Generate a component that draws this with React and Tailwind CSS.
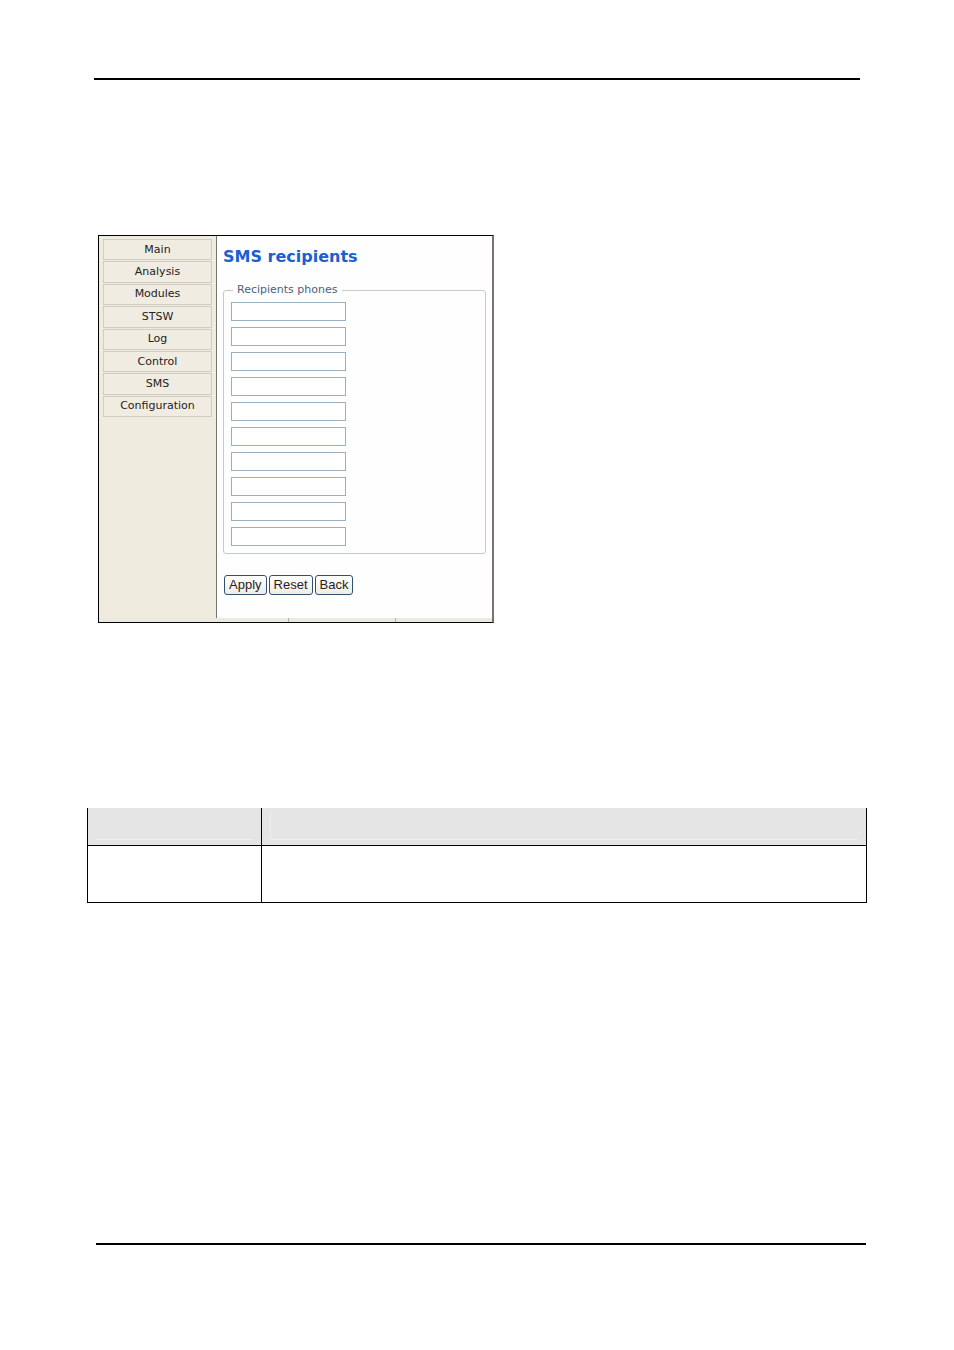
import { useState } from "react";

const menuItems = [
  "Main",
  "Analysis",
  "Modules",
  "STSW",
  "Log",
  "Control",
  "SMS",
  "Configuration",
];

const emptyPhones = Array(10).fill("");

function Sidebar() {
  return (
    <nav className="w-[118px] shrink-0 border-r border-[#77756f] bg-[#f0ebdf] px-1 pt-[3px]">
      <ul className="grid h-[179px] grid-rows-8">
        {menuItems.map((item) => (
          <li key={item} className="flex pb-px">
            <button
              type="button"
              className="w-full border border-[#d0cec4] bg-[#f1ece1] text-center text-[11px] leading-4 text-[#222]"
            >
              {item}
            </button>
          </li>
        ))}
      </ul>
    </nav>
  );
}

function RecipientsForm() {
  const [phones, setPhones] = useState(emptyPhones);

  const updatePhone = (index, value) => {
    setPhones(phones.map((phone, i) => (i === index ? value : phone)));
  };

  const buttonStyle =
    "h-5 rounded-[3px] border border-[#34506f] bg-gradient-to-b from-white to-[#efece6] px-1 text-[13px] leading-4 text-[#2a1c20] font-['Liberation_Sans',Arial,sans-serif]";

  return (
    <form
      className="flex-1 bg-[#fefefe] px-1.5 pt-[9px]"
      onSubmit={(e) => e.preventDefault()}
      onReset={() => setPhones(emptyPhones)}
    >
      <h1 className="text-base leading-6 font-bold text-[#1a60cf]">
        SMS recipients
      </h1>

      <fieldset className="mt-[13px] rounded-[3px] border border-[#c5cbc6] px-[7px] pb-[7px]">
        <legend className="ml-0.5 px-1 text-[11px] leading-4 text-[#4c5f80]">
          Recipients phones
        </legend>
        <div className="flex flex-col gap-1.5 pt-1">
          {phones.map((phone, index) => (
            <input
              key={index}
              type="text"
              aria-label={`Recipient phone ${index + 1}`}
              value={phone}
              onChange={(e) => updatePhone(index, e.target.value)}
              className="h-[19px] w-[115px] border border-[#9aafc0] bg-white px-1 text-[11px]"
            />
          ))}
        </div>
      </fieldset>

      <div className="mt-[21px] flex gap-0.5 pb-[23px] pl-px">
        <button type="submit" className={buttonStyle}>
          Apply
        </button>
        <button type="reset" className={buttonStyle}>
          Reset
        </button>
        <button type="button" className={buttonStyle}>
          Back
        </button>
      </div>
    </form>
  );
}

export default function App() {
  return (
    <div className="min-h-screen bg-white pt-[78px] font-['DejaVu_Sans',Verdana,sans-serif]">
      {/* Page header rule */}
      <hr className="mx-[94px] border-t-2 border-black" />

      {/* Settings window */}
      <main className="ml-[98px] mr-[88px] mt-[155px]">
        <div className="w-full max-w-[396px] border border-r-2 border-black border-r-[#777470]">
          <div className="flex">
            <Sidebar />
            <RecipientsForm />
          </div>
          {/* Status bar */}
          <div className="flex h-1 bg-[#ece9df]">
            <div className="w-[190px] border-r border-[#b5b3aa]" />
            <div className="w-[107px] border-r border-[#b5b3aa]" />
          </div>
        </div>
      </main>

      {/* Parameter table */}
      <div className="mx-[87px] mt-[185px]">
        <table className="w-full table-fixed border-collapse border border-t-0 border-black">
          <colgroup>
            <col className="w-[174px]" />
            <col />
          </colgroup>
          <thead>
            <tr className="h-[37px] border-b border-black bg-[#e5e5e5]">
              <th className="border-r border-black px-2 pb-1 pt-1">
                <div className="h-7 border-b border-[#eeeeee]" />
              </th>
              <th className="px-2 pb-1 pt-1">
                <div className="h-7 border-b border-l border-[#eeeeee]" />
              </th>
            </tr>
          </thead>
          <tbody>
            <tr className="h-[57px]">
              <td className="border-r border-black" />
              <td />
            </tr>
          </tbody>
        </table>
      </div>

      {/* Page footer rule */}
      <hr className="ml-24 mr-[88px] mt-[340px] border-t-2 border-black" />
    </div>
  );
}
